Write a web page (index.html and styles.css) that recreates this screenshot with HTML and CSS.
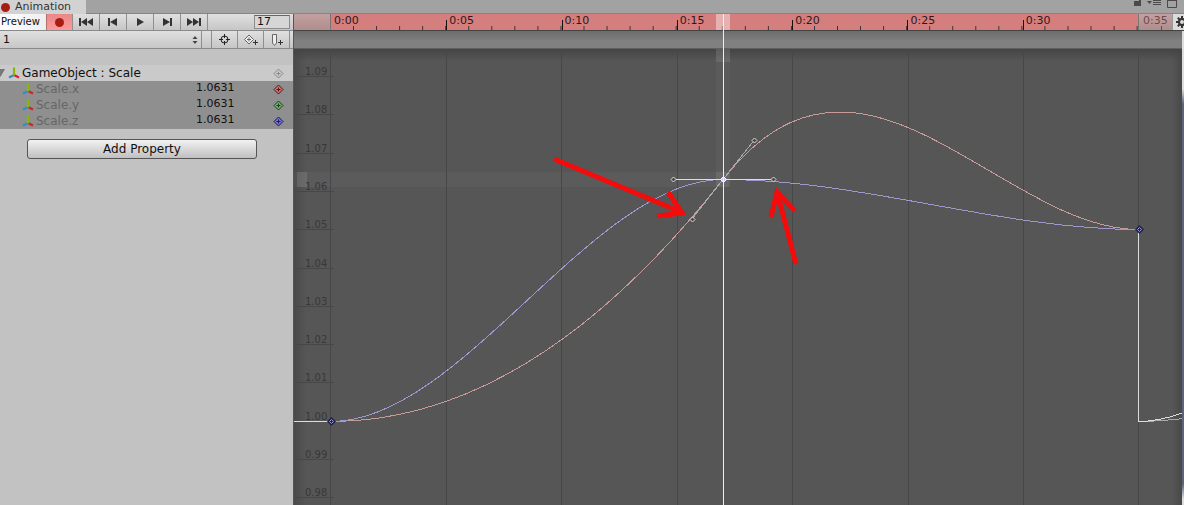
FILE: index.html
```html
<!DOCTYPE html>
<html lang="en">
<head>
    <meta charset="UTF-8">
    <meta name="viewport" content="width=device-width, initial-scale=1.0">
    <title>Animation</title>
    <link rel="stylesheet" href="styles.css">
</head>
<body>
    <!-- shared icons -->
    <svg class="defs" width="0" height="0">
        <symbol id="axis" viewBox="0 0 12 12">
            <path d="M6 8L1 10.500" stroke="#2c8fc9" stroke-width="2.2"/>
            <path d="M6 8L11 10.500" stroke="#d3202a" stroke-width="2.2"/>
            <path d="M6 8.500V0.500" stroke="#8db600" stroke-width="2.2"/>
        </symbol>
        <symbol id="key" viewBox="0 0 11 11">
            <path d="M5.5 1L10 5.5L5.5 10L1 5.5Z" stroke="currentColor"/>
            <path d="M5.5 3.5V7.5M3.5 5.5H7.5" stroke="currentColor"/>
        </symbol>
    </svg>

    <div class="window">
        <header class="tabbar">
            <div class="tab"><span class="dot"></span>Animation</div>
            <svg class="window-icons" width="50" height="13">
                <path d="M0 1H7V6H0ZM5 0H7V2H5Z" fill="#4a4a4a"/>
                <path d="M13 1H18L15.500 4Z" fill="#4a4a4a"/>
                <path d="M19 0.500H27M19 2.500H27M19 4.500H27" stroke="#4a4a4a"/>
                <path d="M33.500 0V7.500H42.500V0M33 0.500H43" stroke="#4a4a4a" fill="none"/>
            </svg>
        </header>

        <div class="main">
            <aside class="side">
                <div class="toolbar">
                    <button class="preview">Preview</button>
                    <button class="tool record" aria-label="Record"><span class="dot"></span></button>
                    <button class="tool" aria-label="First key">
                        <svg width="14" height="10"><path d="M0 1H2V9H0ZM8 1V9L2 5ZM14 1V9L8 5Z"/></svg>
                    </button>
                    <button class="tool" aria-label="Previous key">
                        <svg width="10" height="10"><path d="M0 1H2V9H0ZM9 1V9L2 5Z"/></svg>
                    </button>
                    <button class="tool" aria-label="Play">
                        <svg width="8" height="10"><path d="M1 1L8 5L1 9Z"/></svg>
                    </button>
                    <button class="tool" aria-label="Next key">
                        <svg width="10" height="10"><path d="M8 1H10V9H8ZM1 1L8 5L1 9Z"/></svg>
                    </button>
                    <button class="tool" aria-label="Last key">
                        <svg width="14" height="10"><path d="M12 1H14V9H12ZM0 1L6 5L0 9ZM6 1L12 5L6 9Z"/></svg>
                    </button>
                    <input class="frame" type="text" value="17" aria-label="Frame">
                </div>

                <div class="toolbar">
                    <label class="clip">
                        <select aria-label="Clip"><option>1</option></select>
                        <svg width="6" height="8"><path d="M0.500 3L3 0L5.500 3ZM0.500 5L3 8L5.500 5Z"/></svg>
                    </label>
                    <span class="gap"></span>
                    <button class="tool" aria-label="Filter by selection">
                        <svg width="11" height="11"><circle cx="5.500" cy="5.500" r="3.500" fill="none" stroke="#222"/><path d="M5.500 0V4M5.500 7V11M0 5.500H4M7 5.500H11" stroke="#222"/></svg>
                    </button>
                    <button class="tool" aria-label="Add keyframe">
                        <svg width="16" height="12"><path d="M6 1L10.500 5.500L6 10L1.500 5.500Z" fill="#eee" stroke="#666"/><path d="M6 3.500V7.500M4 5.500H8" stroke="#666"/><path d="M12.500 6V11M10 8.500H15" stroke="#333"/></svg>
                    </button>
                    <button class="tool" aria-label="Add event">
                        <svg width="12" height="12"><path d="M1.500 0.500H5.500V9L3.500 11.500L1.500 9Z" fill="#eee" stroke="#666"/><path d="M9.500 6V11M7 8.500H12" stroke="#333"/></svg>
                    </button>
                </div>

                <ul class="props">
                    <li class="prop group">
                        <svg class="fold" width="5" height="8"><path d="M-4 0H5L0.500 8Z"/></svg>
                        <svg class="axis" width="12" height="12"><use href="#axis"/></svg>
                        <span class="name">GameObject : Scale</span>
                        <svg class="key" width="11" height="11"><use href="#key"/></svg>
                    </li>
                    <li class="prop">
                        <svg class="axis" width="12" height="12"><use href="#axis"/></svg>
                        <span class="name">Scale.x</span>
                        <span class="value">1.0631</span>
                        <svg class="key red" width="11" height="11"><use href="#key"/></svg>
                    </li>
                    <li class="prop">
                        <svg class="axis" width="12" height="12"><use href="#axis"/></svg>
                        <span class="name">Scale.y</span>
                        <span class="value">1.0631</span>
                        <svg class="key green" width="11" height="11"><use href="#key"/></svg>
                    </li>
                    <li class="prop">
                        <svg class="axis" width="12" height="12"><use href="#axis"/></svg>
                        <span class="name">Scale.z</span>
                        <span class="value">1.0631</span>
                        <svg class="key blue" width="11" height="11"><use href="#key"/></svg>
                    </li>
                </ul>
                <button class="add">Add Property</button>
            </aside>

            <section class="timeline">
                <div class="ruler">
                    <div class="outside before"></div>
                    <div class="range">
                        <span>0:00</span>
                        <span>0:05</span>
                        <span>0:10</span>
                        <span>0:15</span>
                        <span>0:20</span>
                        <span>0:25</span>
                        <span>0:30</span>
                    </div>
                    <div class="outside after">0:35</div>
                    <button class="gear" aria-label="Options">
                        <svg width="10" height="12"><circle cx="7" cy="6" r="3" fill="none" stroke="#333" stroke-width="2"/><path d="M7 0V3M7 9V12M1 6H4M2.800 1.800L5 4M2.800 10.200L5 8" stroke="#333" stroke-width="2"/></svg>
                    </button>
                </div>
                <div class="events"></div>
                <svg class="curves">
                    <!-- current value row / frame column -->
                    <g fill="#fff">
                        <rect x="0" y="123" width="434" height="15" opacity="0.03"/>
                        <rect x="3" y="123" width="10" height="15" opacity="0.1"/>
                        <rect x="422" y="0" width="14" height="13" opacity="0.12"/>
                        <rect x="422" y="13" width="14" height="125" opacity="0.03"/>
                        <rect x="422" y="123" width="14" height="15" opacity="0.06"/>
                    </g>
                    <path class="grid" d="M36.500 0V456M152.500 0V456M267.500 0V456M383.500 0V456M498.500 0V456M614.500 0V456M729.500 0V456M844.500 0V456"/>
                    <path class="grid" d="M0 27.500H40M0 65.500H40M0 104.500H40M0 142.500H40M0 180.500H40M0 219.500H40M0 257.500H40M0 295.500H40M0 333.500H40M0 372.500H40M0 410.500H40M0 448.500H40"/>
                    <g class="scale">
                        <text x="11" y="26">1.09</text>
                        <text x="11" y="64">1.08</text>
                        <text x="11" y="103">1.07</text>
                        <text x="11" y="141">1.06</text>
                        <text x="11" y="179">1.05</text>
                        <text x="11" y="218">1.04</text>
                        <text x="11" y="256">1.03</text>
                        <text x="11" y="294">1.02</text>
                        <text x="11" y="332">1.01</text>
                        <text x="11" y="371">1.00</text>
                        <text x="11" y="409">0.99</text>
                        <text x="11" y="447">0.98</text>
                    </g>
                    <!-- wrapped part before and after the clip -->
                    <g class="curve">
                        <path stroke="#aaa" d="M844.500 372.500C975 372.500 1106 297 1237 130.500"/>
                        <path stroke="#ddd" d="M0 372.500H37M844.500 181V372.500C975 372.500 1106 130.500 1237 130.500"/>
                        <path stroke="#c99a9a" d="M37 372.500C168 372.500 298 297 429 130.500C568 -46.500 706 180.500 845 180.500"/>
                        <path stroke="#9c98d0" d="M37 372.500C168 372.500 298 130.500 429 130.500C568 130.500 706 180.500 845 180.500"/>
                        <path stroke="#aaa" d="M398 170L429 130.500L460 91.500"/>
                        <path stroke="#ddd" d="M379 130.500H480"/>
                    </g>
                    <g class="handles">
                        <path d="M379.500 128L382 130.500L379.500 133L377 130.500Z"/>
                        <path d="M479.500 128L482 130.500L479.500 133L477 130.500Z"/>
                        <path d="M398.500 168L401 170.500L398.500 173L396 170.500Z"/>
                        <path d="M460.500 89L463 91.500L460.500 94L458 91.500Z"/>
                        <path class="current" d="M429.500 127.500L432.500 130.500L429.500 133.500L426.500 130.500Z"/>
                    </g>
                    <g class="keys">
                        <path d="M37.500 368L42 372.500L37.500 377L33 372.500Z"/>
                        <path d="M845.500 176L850 180.500L845.500 185L841 180.500Z"/>
                        <path class="inner" d="M37.500 370.500L39.500 372.500L37.500 374.500L35.500 372.500Z"/>
                        <path class="inner" d="M845.500 178.500L847.500 180.500L845.500 182.500L843.500 180.500Z"/>
                    </g>
                    <!-- red arrows -->
                    <g class="arrows">
                        <path d="M260 110L387 163M374 143L388 164L363 167"/>
                        <path d="M502 215L483 143M477 168L483 143L501 162"/>
                    </g>
                </svg>
                <div class="playhead"></div>
            </section>
        </div>
    </div>
</body>
</html>
```
FILE: styles.css
```css
* {
    box-sizing: border-box;
    margin: 0;
    padding: 0;
}

body {
    font: 11px/16px "DejaVu Sans", Verdana, sans-serif;
    color: #111;
    background: #c2c2c2;
    overflow: hidden;
}

button, input, select {
    font: inherit;
    color: inherit;
    border: 0;
    border-radius: 0;
    background: none;
}

svg {
    display: block;
    flex: none;
}

.defs {
    position: absolute;
}

.window {
    height: 100vh;
    display: flex;
    flex-direction: column;
}

.tabbar {
    display: flex;
    justify-content: space-between;
    height: 14px;
    background: #a2a2a2;
    border-bottom: 1px solid #858585;
}

.tab {
    display: flex;
    align-items: center;
    gap: 5px;
    width: 86px;
    height: 14px;
    padding-left: 1px;
    color: #333;
    background: #d2d2d2;
}

.dot {
    width: 9px;
    height: 9px;
    border-radius: 50%;
    background: #a81c14;
}

.main {
    flex: 1;
    display: flex;
    min-height: 0;
}

/* left panel */
.side {
    width: 293px;
    flex: none;
}

.toolbar {
    display: flex;
    height: 17px;
    background: linear-gradient(#e0e0e0, #c6c6c6);
    border-bottom: 1px solid #8a8a8a;
}

.toolbar + .toolbar {
    height: 18px;
    padding-right: 3px;
}

.preview {
    width: 46px;
    padding-left: 1px;
    font-size: 10px;
    text-align: left;
    background: linear-gradient(90deg, #fff, #eee);
}

.tool {
    display: flex;
    align-items: center;
    justify-content: center;
    width: 27px;
    border-right: 1px solid #8f8f8f;
    fill: #333;
}

.toolbar + .toolbar .tool {
    width: 26px;
}

.record {
    border-left: 1px solid #b07070;
    background: linear-gradient(#e88888, #ff9a9a);
}

.frame {
    width: 36px;
    height: 14px;
    margin: 1px 3px 0 auto;
    padding-left: 2px;
    border: 1px solid #8c8c8c;
    border-top-color: #666;
    background: #d6d6d6;
}

.clip {
    display: flex;
    flex: 1;
    align-items: center;
    padding-right: 3px;
    border-right: 1px solid #8f8f8f;
    fill: #444;
}

.clip select {
    flex: 1;
    padding-left: 3px;
    appearance: none;
}

.gap {
    width: 10px;
    border-right: 1px solid #8f8f8f;
}

.props {
    margin-top: 16px;
    list-style: none;
}

.prop {
    display: flex;
    align-items: center;
    height: 16px;
    padding: 0 9px 0 22px;
    color: #666;
    background: #8f8f8f;
}

.group {
    padding-left: 0;
    color: #111;
    background: #cacaca;
}

.fold {
    margin-right: 3px;
    fill: #777;
}

.name {
    flex: 1;
    padding-left: 2px;
    font-size: 12px;
}

.value {
    width: 77px;
    color: #111;
    line-height: 14px;
    align-self: flex-start;
}

.key {
    color: #888;
    fill: none;
}

.red { color: #421c1c; fill: #d97070; }
.green { color: #1c3c1c; fill: #70b070; }
.blue { color: #1c1c4c; fill: #7a70d9; }

.add {
    display: block;
    width: 230px;
    height: 20px;
    margin: 10px 0 0 27px;
    border: 1px solid #555;
    border-radius: 3px;
    font-size: 12px;
    background: linear-gradient(#f2f2f2, #c0c0c0);
}

/* ruler and curves */
.timeline {
    position: relative;
    flex: 1;
    min-width: 0;
    display: flex;
    flex-direction: column;
    border-left: 1px solid #555;
    background: linear-gradient(#ddd 75px, #5c6478 90px, #5c6478 470px, #ddd 485px);
}

.ruler {
    display: flex;
    height: 17px;
    line-height: 14px;
    border-bottom: 1px solid #444;
}

.outside {
    background: linear-gradient(#c4a0a0, #b08e8e);
}

.before {
    width: 36px;
}

.after {
    width: 34px;
    padding-left: 4px;
    color: #6e4b4b;
    border-left: 1px solid #777;
    background: linear-gradient(#555, #555) 22px 100% / 1px 4px no-repeat, linear-gradient(#c4a0a0, #b08e8e);
}

.range {
    flex: 1;
    display: grid;
    grid-template-columns: repeat(7, 1fr);
    color: #301818;
    border-left: 1px solid #777;
    background: linear-gradient(90deg, #333 1px, transparent 1px) -1px 100% / calc(100% / 35) 4px repeat-x #d47e7e;
}

.range span {
    padding-left: 3px;
    background: linear-gradient(#111, #111) 0 100% / 1px 10px no-repeat;
}

.range span:first-child {
    background: none;
}

.gear {
    width: 12px;
    padding-left: 2px;
    border-left: 1px solid #999;
    background: #dcdcdc;
}

.events {
    height: 18px;
    margin-right: 2px;
    background: linear-gradient(#6c6c6c, #808080 60%);
    border-bottom: 1px solid #606060;
}

.curves {
    flex: 1;
    width: calc(100% - 2px);
    min-height: 0;
    background:
        linear-gradient(#444, transparent 12px),
        linear-gradient(90deg, #4a4a4a, transparent 12px),
        linear-gradient(270deg, #484848, transparent 10px),
        #565656;
    fill: none;
}

.grid {
    stroke: #474747;
}

.scale {
    fill: #383838;
    font-size: 10px;
}

.curve {
    shape-rendering: crispEdges;
}

.handles {
    stroke: #ddd;
    fill: #444;
}

.handles .current {
    stroke: #fff;
    fill: #ccccff;
}

.keys {
    fill: #24243a;
}

.keys .inner {
    stroke: #9c98e8;
}

.arrows {
    stroke: #f40b0b;
    stroke-width: 5;
}

/* line over the ruler, the events and the curves */
.playhead {
    position: absolute;
    top: 0;
    bottom: 0;
    left: 422px;
    width: 14px;
    background:
        linear-gradient(#eee, #eee) 7px 0 / 1px 100% no-repeat,
        linear-gradient(#fff6, #fff6) 0 0 / 14px 16px no-repeat;
}
```
